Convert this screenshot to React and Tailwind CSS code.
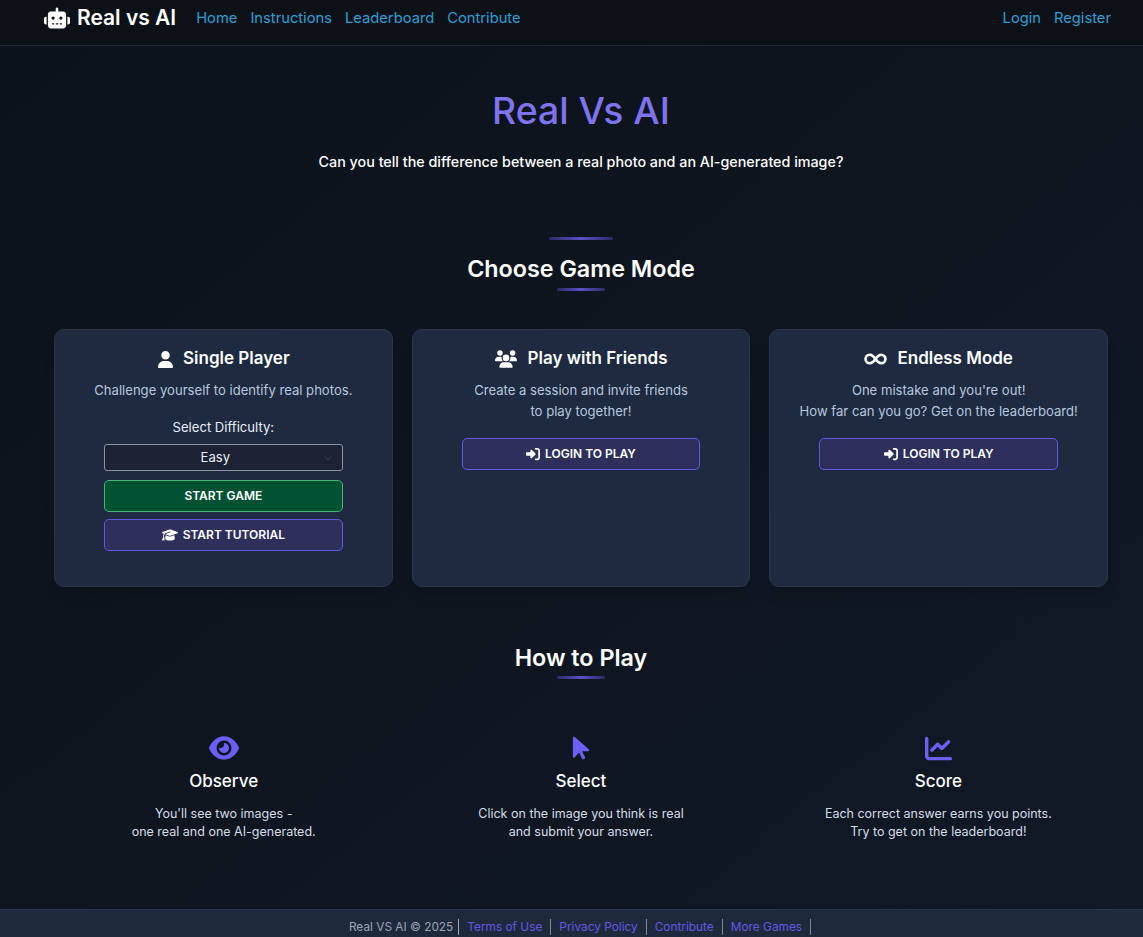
import { FaRobot, FaUser, FaUsers, FaGraduationCap, FaRightToBracket, FaEye, FaArrowPointer, FaChartLine, FaChevronDown } from 'react-icons/fa6';

const navLinks = ['Home', 'Instructions', 'Leaderboard', 'Contribute'];

const steps = [
  { icon: FaEye, size: 'text-[30px]', title: 'Observe', lines: ["You'll see two images -", 'one real and one AI-generated.'] },
  { icon: FaArrowPointer, size: 'text-[26px]', title: 'Select', lines: ['Click on the image you think is real', 'and submit your answer.'] },
  { icon: FaChartLine, size: 'text-[27px]', title: 'Score', lines: ['Each correct answer earns you points.', 'Try to get on the leaderboard!'] },
];

// the icon packs' infinity is either too thin or too heavy here
const InfinityIcon = ({ className }) => (
  <svg viewBox="0 0 24 12" fill="none" stroke="currentColor" strokeWidth="2.7" className={className}>
    <path d="M12 6C10 3 8.5 1.6 6 1.6a4.4 4.4 0 0 0 0 8.8C8.5 10.4 10 9 12 6c2-3 3.5-4.4 6-4.4a4.4 4.4 0 0 1 0 8.8C15.5 10.4 14 9 12 6Z" />
  </svg>
);

const Rule = ({ className }) => (
  <div className={`h-[3px] rounded-full bg-gradient-to-r from-[#2f2a66] via-[#5a50c8] to-[#2f2a66] ${className}`} />
);

const PurpleButton = ({ icon: Icon, iconSize, children }) => (
  <button className="flex h-[32px] w-full items-center justify-center gap-[5px] rounded-[5px] border border-[#6358e6] bg-[#2e2f5b] pb-[1px] text-[12px] font-semibold text-white">
    <Icon className={iconSize} />
    {children}
  </button>
);

const Card = ({ icon: Icon, iconSize, gap, title, children }) => (
  <div className="h-[258px] flex-1 rounded-[10px] border border-[#2a3648] bg-[#1d2a40] px-[10px] pt-[16px] text-center shadow-lg">
    <h3 className={`flex h-[26px] items-center justify-center text-[17px] font-semibold text-white ${gap}`}>
      <Icon className={iconSize} />
      {title}
    </h3>
    {children}
  </div>
);

export default function App() {
  return (
    <div className="flex h-[937px] flex-col overflow-hidden bg-gradient-to-br from-[#0c1219] to-[#111927] font-['Inter',sans-serif] text-white">
      {/* Navbar */}
      <nav className="flex h-[46px] shrink-0 items-start justify-between border-b border-[#1f2635] bg-[#0c1118] pl-[44px] pr-[32px]">
        <div className="flex items-center">
          <span className="flex h-[35px] items-center gap-[7px] text-[21px] font-semibold">
            <FaRobot className="text-[26px]" />
            Real vs AI
          </span>
          <div className="ml-[20px] flex gap-[13px] pt-[2px] text-[14.72px] text-[#2d9fd6]">
            {navLinks.map((link) => (
              <a key={link}>{link}</a>
            ))}
          </div>
        </div>
        <div className="flex h-[37px] items-center gap-[13px] text-[14.72px] text-[#2d9fd6]">
          <a>Login</a>
          <a>Register</a>
        </div>
      </nav>

      <main className="flex flex-1 flex-col items-center pl-[19px]">
        {/* Hero */}
        <h1 className="mt-[41px] text-[37.3px] font-medium leading-[48px] text-[#7f73f0]">Real Vs AI</h1>
        <p className="mt-[16px] text-[14.32px] font-medium leading-[22px]">
          Can you tell the difference between a real photo and an AI-generated image?
        </p>

        {/* Game modes */}
        <Rule className="mt-[64px] w-[64px]" />
        <h2 className="mt-[13px] text-[23.3px] font-semibold leading-[32px]">Choose Game Mode</h2>
        <Rule className="mt-[3px] w-[48px]" />

        <div className="mt-[38px] flex w-[1054px] gap-[19px]">
          <Card icon={FaUser} iconSize="text-[17px]" gap="gap-[9px]" title="Single Player">
            <p className="mt-[8px] text-[13.1px] leading-[21px] text-[#b8c7de]">Challenge yourself to identify real photos.</p>
            <div className="mx-[39px]">
              <p className="mt-[16px] text-[13.1px] leading-[21px] text-[#e8edf5]">Select Difficulty:</p>
              <div className="relative mt-[6px] flex h-[27px] items-center justify-center rounded-[3px] border border-[#8a94a6] bg-[#1c2233] pr-[16px] text-[13.1px] text-[#e8edf5]">
                Easy
                <FaChevronDown className="absolute right-[10px] top-[9px] text-[8px] text-[#3a4356]" />
              </div>
              <button className="mt-[9px] h-[32px] w-full rounded-[5px] border border-[#47b576] bg-[#005232] text-[12px] font-semibold text-white">
                START GAME
              </button>
              <div className="mt-[7px]">
                <PurpleButton icon={FaGraduationCap} iconSize="text-[16px]">START TUTORIAL</PurpleButton>
              </div>
            </div>
          </Card>

          <Card icon={FaUsers} iconSize="text-[22px]" gap="gap-[11px]" title="Play with Friends">
            <p className="mt-[8px] text-[13.1px] leading-[21px] text-[#b8c7de]">
              Create a session and invite friends
              <br />
              to play together!
            </p>
            <div className="mx-[39px] mt-[16px]">
              <PurpleButton icon={FaRightToBracket} iconSize="text-[14px]">LOGIN TO PLAY</PurpleButton>
            </div>
          </Card>

          <Card icon={InfinityIcon} iconSize="h-[12px] w-[23px]" gap="gap-[10px]" title="Endless Mode">
            <p className="mt-[8px] text-[13.1px] leading-[21px] text-[#b8c7de]">
              One mistake and you're out!
              <br />
              How far can you go? Get on the leaderboard!
            </p>
            <div className="mx-[39px] mt-[16px]">
              <PurpleButton icon={FaRightToBracket} iconSize="text-[14px]">LOGIN TO PLAY</PurpleButton>
            </div>
          </Card>
        </div>

        {/* How to play */}
        <h2 className="mt-[55px] text-[23.3px] font-semibold leading-[32px]">How to Play</h2>
        <Rule className="mt-[2px] w-[48px]" />

        <div className="mt-[54px] grid w-[1072px] grid-cols-3 text-center">
          {steps.map(({ icon: Icon, size, title, lines }) => (
            <div key={title} className="flex flex-col items-center">
              <div className="flex h-[30px] items-center">
                <Icon className={`text-[#6c5ff5] ${size}`} />
              </div>
              <h4 className="mt-[6px] text-[17px] font-medium leading-[24px]">{title}</h4>
              <p className="mt-[12px] text-[12.5px] leading-[18px] text-[#d5dce8]">
                {lines[0]}
                <br />
                {lines[1]}
              </p>
            </div>
          ))}
        </div>
      </main>

      {/* Footer */}
      <footer className="flex h-[28px] shrink-0 items-start justify-center border-t border-[#2a3252] bg-[#1e293b] pl-[17px] pt-[9px] text-[11.85px] leading-[16px] text-[#9aa5b8]">
        <span className="border-r border-[#9aa5b8] pr-[5px]">Real VS AI © 2025</span>
        {['Terms of Use', 'Privacy Policy', 'Contribute', 'More Games'].map((link) => (
          <a key={link} className="border-r border-[#7d8598] px-[8px] text-[#6358e6]">
            {link}
          </a>
        ))}
      </footer>
    </div>
  );
}
